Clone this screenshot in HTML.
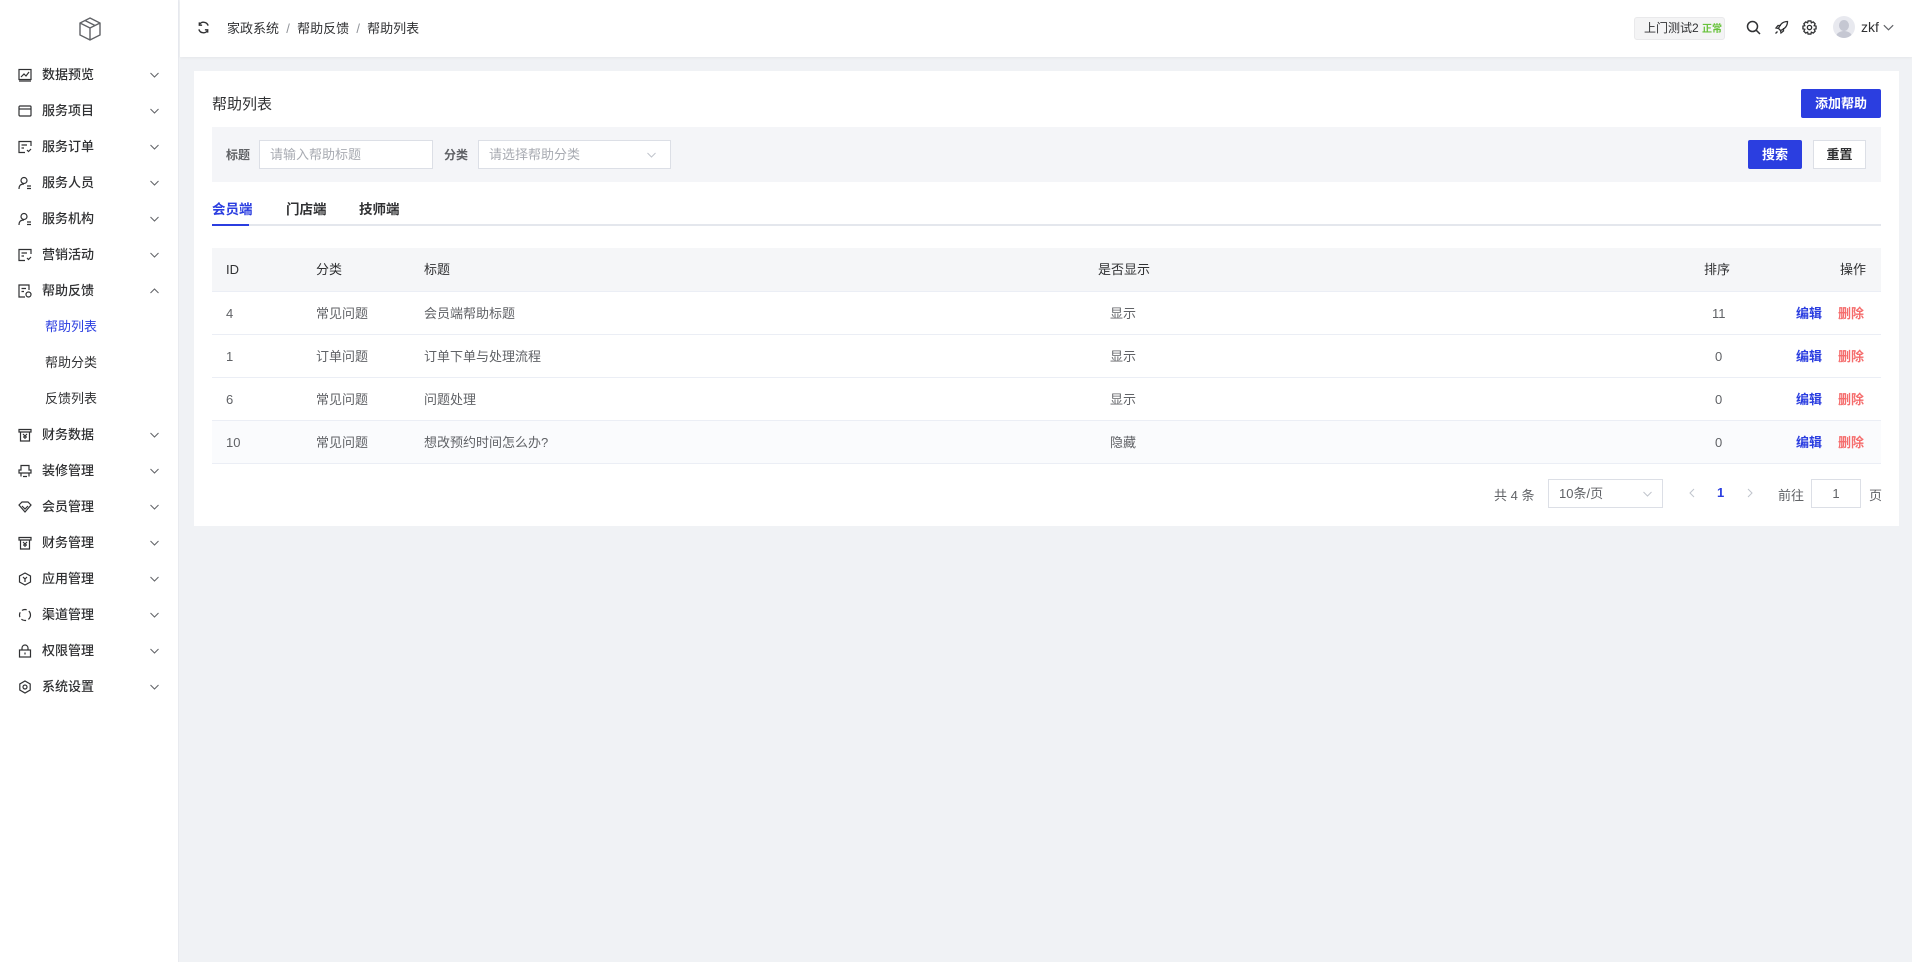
<!DOCTYPE html>
<html><head><meta charset="utf-8"><style>
*{box-sizing:border-box;margin:0;padding:0}
body{width:1912px;height:962px;background:#f0f2f5;font-family:"Liberation Sans","Noto Sans CJK SC",sans-serif;color:#303133;position:relative;overflow:hidden;font-size:13px}
.a{position:absolute}
#side{left:0;top:0;width:179px;height:962px;background:#fff;border-right:1px solid #e8eaef}
.mi{position:absolute;left:0;width:179px;height:36px;line-height:36px;font-size:13px;font-weight:500;color:#303133}
.mi .ic{position:absolute;left:18px;top:11px;width:14px;height:14px}
.mi .t{position:absolute;left:42px}
.cv{position:absolute;left:150px;top:15px;width:9px;height:6px}
.sub{position:absolute;left:45px;font-size:13px;color:#303133;height:36px;line-height:36px}
#hdr{left:180px;top:0;width:1732px;height:57px;background:#fff;box-shadow:0 1px 3px rgba(0,0,0,.05)}
#card{left:194px;top:71px;width:1705px;height:455px;background:#fff}
.in{position:absolute;background:#fff;border:1px solid #dcdfe6;height:29px;line-height:27px;padding-left:10px;color:#a8abb2;font-size:13px}
.row{position:absolute;left:212px;width:1669px;height:43px;border-bottom:1px solid #ebeef5}
.c{position:absolute;top:0;line-height:43px;font-size:13px;color:#606266}
.btn{position:absolute;height:29px;line-height:29px;text-align:center;font-size:13px;font-weight:bold}
</style></head><body>
<svg width="0" height="0" style="position:absolute"><defs><symbol id="dn" viewBox="0 0 9 6"><path d="M0.5 1 L4.5 5 L8.5 1" fill="none" stroke="#606266" stroke-width="1"/></symbol><symbol id="up" viewBox="0 0 9 6"><path d="M0.5 5 L4.5 1 L8.5 5" fill="none" stroke="#606266" stroke-width="1"/></symbol><symbol id="dl" viewBox="0 0 9 6"><path d="M0.5 1 L4.5 5 L8.5 1" fill="none" stroke="#c0c4cc" stroke-width="1"/></symbol></defs></svg>
<div id="side" class="a">
<svg class="a" style="left:78px;top:16px" width="24" height="26" viewBox="0 0 24 26" fill="none" stroke="#606266" stroke-width="1.4"><path d="M12 2 L22 7 L22 19 L12 24 L2 19 L2 7 Z M2 7 L12 12 L22 7 M12 12 L12 24 M7 4.5 L17 9.5"/></svg>
<div class="mi" style="top:57px"><svg class="ic" viewBox="0 0 14 14" fill="none" stroke="#303133" stroke-width="1.2"><rect x="1" y="1.5" width="12" height="10"/><path d="M3 9 L6 6 L8 8 L11 4 M1 13 H13"/></svg><span class="t">数据预览</span><svg class="cv"><use href="#dn"/></svg></div>
<div class="mi" style="top:93px"><svg class="ic" viewBox="0 0 14 14" fill="none" stroke="#303133" stroke-width="1.2"><rect x="1" y="2" width="12" height="10" rx="1"/><path d="M1 5 H13"/></svg><span class="t">服务项目</span><svg class="cv"><use href="#dn"/></svg></div>
<div class="mi" style="top:129px"><svg class="ic" viewBox="0 0 14 14" fill="none" stroke="#303133" stroke-width="1.2"><path d="M13 6 V1.5 H1 V12.5 H7 M3.5 5 H9 M3.5 8 H6 M9 10 L10.5 11.5 L13 9"/></svg><span class="t">服务订单</span><svg class="cv"><use href="#dn"/></svg></div>
<div class="mi" style="top:165px"><svg class="ic" viewBox="0 0 14 14" fill="none" stroke="#303133" stroke-width="1.2"><circle cx="6" cy="4.5" r="3"/><path d="M1 13 C1 9 3 8 6 8 M9 10 H13 M9 12.5 H13"/></svg><span class="t">服务人员</span><svg class="cv"><use href="#dn"/></svg></div>
<div class="mi" style="top:201px"><svg class="ic" viewBox="0 0 14 14" fill="none" stroke="#303133" stroke-width="1.2"><circle cx="6" cy="4.5" r="3"/><path d="M1 13 C1 9 3 8 6 8 M9 10 H13 M9 12.5 H13"/></svg><span class="t">服务机构</span><svg class="cv"><use href="#dn"/></svg></div>
<div class="mi" style="top:237px"><svg class="ic" viewBox="0 0 14 14" fill="none" stroke="#303133" stroke-width="1.2"><path d="M13 6 V1.5 H1 V12.5 H7 M3.5 5 H9 M3.5 8 H6 M9 10 L10.5 11.5 L13 9"/></svg><span class="t">营销活动</span><svg class="cv"><use href="#dn"/></svg></div>
<div class="mi" style="top:273px"><svg class="ic" viewBox="0 0 14 14" fill="none" stroke="#303133" stroke-width="1.2"><path d="M11 6 V1 H1 V13 H7 M3.5 4.5 H8 M3.5 7.5 H6"/><circle cx="10.5" cy="10.5" r="2.5"/></svg><span class="t">帮助反馈</span><svg class="cv"><use href="#up"/></svg></div>
<div class="sub" style="top:309px;color:#2b3ee0">帮助列表</div>
<div class="sub" style="top:345px">帮助分类</div>
<div class="sub" style="top:381px">反馈列表</div>
<div class="mi" style="top:417px"><svg class="ic" viewBox="0 0 14 14" fill="none" stroke="#303133" stroke-width="1.2"><path d="M1 1.5 H13 V4 H1 Z M2.5 4 V13 H11.5 V4 M5 6 L7 8 L9 6 M7 8 V11 M5 9 H9"/></svg><span class="t">财务数据</span><svg class="cv"><use href="#dn"/></svg></div>
<div class="mi" style="top:453px"><svg class="ic" viewBox="0 0 14 14" fill="none" stroke="#303133" stroke-width="1.2"><path d="M3 1.5 H11 V6 H13 V9 H1 V6 H3 Z M3 9 V12.5 M11 9 V12.5 M5 12.5 H9"/></svg><span class="t">装修管理</span><svg class="cv"><use href="#dn"/></svg></div>
<div class="mi" style="top:489px"><svg class="ic" viewBox="0 0 14 14" fill="none" stroke="#303133" stroke-width="1.2"><path d="M1 5 L4 2 H10 L13 5 L7 12 Z M4 6 L7 9 L10 6"/></svg><span class="t">会员管理</span><svg class="cv"><use href="#dn"/></svg></div>
<div class="mi" style="top:525px"><svg class="ic" viewBox="0 0 14 14" fill="none" stroke="#303133" stroke-width="1.2"><path d="M1 1.5 H13 V4 H1 Z M2.5 4 V13 H11.5 V4 M5 6 L7 8 L9 6 M7 8 V11 M5 9 H9"/></svg><span class="t">财务管理</span><svg class="cv"><use href="#dn"/></svg></div>
<div class="mi" style="top:561px"><svg class="ic" viewBox="0 0 14 14" fill="none" stroke="#303133" stroke-width="1.2"><path d="M7 1 L12.5 4 V10 L7 13 L1.5 10 V4 Z M5 5 L7 7 L9 5 M7 7 V10"/></svg><span class="t">应用管理</span><svg class="cv"><use href="#dn"/></svg></div>
<div class="mi" style="top:597px"><svg class="ic" viewBox="0 0 14 14" fill="none" stroke="#303133" stroke-width="1.2" stroke-dasharray="5 2.5"><circle cx="7" cy="7" r="5.5"/></svg><span class="t">渠道管理</span><svg class="cv"><use href="#dn"/></svg></div>
<div class="mi" style="top:633px"><svg class="ic" viewBox="0 0 14 14" fill="none" stroke="#303133" stroke-width="1.2"><rect x="1.5" y="6" width="11" height="7"/><path d="M4 6 V4 A3 3 0 0 1 10 4 V6 M7 8.5 V10.5"/></svg><span class="t">权限管理</span><svg class="cv"><use href="#dn"/></svg></div>
<div class="mi" style="top:669px"><svg class="ic" viewBox="0 0 14 14" fill="none" stroke="#303133" stroke-width="1.2"><path d="M7 1 L12.2 4 V10 L7 13 L1.8 10 V4 Z"/><circle cx="7" cy="7" r="2"/></svg><span class="t">系统设置</span><svg class="cv"><use href="#dn"/></svg></div>
</div>

<div id="hdr" class="a">
<svg class="a" style="left:17px;top:21px" width="13" height="13" viewBox="0 0 14 14" fill="none" stroke="#303133" stroke-width="1.5"><path d="M12 5 A5.2 5.2 0 0 0 2.5 4 M2 9 A5.2 5.2 0 0 0 11.5 10 M2.5 1.5 V4.5 H5.5 M11.5 12.5 V9.5 H8.5"/></svg>
<div class="a" style="left:47px;top:18px;font-size:13px;color:#303133;white-space:pre">家政系统  <span style="color:#909399">/</span>  帮助反馈  <span style="color:#909399">/</span>  帮助列表</div>
<div class="a" style="left:1454px;top:17px;width:91px;height:23px;background:#f4f4f5;border:1px solid #e9e9eb;border-radius:3px;font-size:12px;line-height:21px;padding-left:9px;color:#303133">上门测试2 <span style="color:#67c23a;font-size:10px;font-weight:bold">正常</span></div>
<svg class="a" style="left:1566px;top:20px" width="15" height="15" viewBox="0 0 15 15" fill="none" stroke="#303133" stroke-width="1.5"><circle cx="6.5" cy="6.5" r="5"/><path d="M10.3 10.3 L14 14"/></svg>
<svg class="a" style="left:1594px;top:20px" width="15" height="15" viewBox="0 0 15 15" fill="none" stroke="#303133" stroke-width="1.3"><path d="M13.5 1.5 C9 1.5 6 4.5 4.5 8.5 L6.5 10.5 C10.5 9 13.5 6 13.5 1.5 Z M4.5 8.5 L2 8 L4 5.5 H7 M6.5 10.5 L7 13 L9.5 11 V8 M3.5 11.5 L1.5 13.5"/></svg>
<svg class="a" style="left:1622px;top:20px" width="15" height="15" viewBox="0 0 16 16" fill="none" stroke="#303133" stroke-width="1.4"><path d="M6.5 1 H9.5 L10 3 L12 2 L14 4 L13 6 L15 6.5 V9.5 L13 10 L14 12 L12 14 L10 13 L9.5 15 H6.5 L6 13 L4 14 L2 12 L3 10 L1 9.5 V6.5 L3 6 L2 4 L4 2 L6 3 Z"/><circle cx="8" cy="8" r="2.3"/></svg>
<div class="a" style="left:1653px;top:16px;width:22px;height:22px;border-radius:50%;background:#e8e9ef;overflow:hidden"><div class="a" style="left:6px;top:4px;width:10px;height:11px;border-radius:50%;background:#c5c7d2"></div><div class="a" style="left:3px;top:15px;width:16px;height:12px;border-radius:50%;background:#c5c7d2"></div></div>
<div class="a" style="left:1681px;top:19px;font-size:14px;color:#303133">zkf</div>
<svg class="a" style="left:1703px;top:24px" width="11" height="7"><use href="#dn"/></svg>
</div>

<div id="card" class="a"></div>
<div class="a" style="left:212px;top:93px;font-size:15px;color:#303133">帮助列表</div>
<div class="btn" style="left:1801px;top:89px;width:80px;background:#2b3ee0;color:#fff;border-radius:2px">添加帮助</div>
<div class="a" style="left:212px;top:127px;width:1669px;height:55px;background:#f4f5f8"></div>
<div class="a" style="left:226px;top:146px;font-size:12px;color:#606266;font-weight:bold">标题</div>
<div class="in" style="left:259px;top:140px;width:174px">请输入帮助标题</div>
<div class="a" style="left:444px;top:146px;font-size:12px;color:#606266;font-weight:bold">分类</div>
<div class="in" style="left:478px;top:140px;width:193px">请选择帮助分类<svg class="a" style="left:168px;top:11px" width="9" height="6"><use href="#dl"/></svg></div>
<div class="btn" style="left:1748px;top:140px;width:54px;background:#2b3ee0;color:#fff;border-radius:2px">搜索</div>
<div class="btn" style="left:1813px;top:140px;width:53px;background:#fff;border:1px solid #dcdfe6;color:#303133;font-weight:bold;line-height:27px">重置</div>

<div class="a" style="left:212px;top:224px;width:1669px;height:2px;background:#e4e7ed"></div>
<div class="a" style="left:212px;top:224px;width:37px;height:2px;background:#2b3ee0"></div>
<div class="a" style="left:212px;top:198px;font-size:13.5px;color:#2b3ee0;font-weight:bold">会员端</div>
<div class="a" style="left:286px;top:198px;font-size:13.5px;color:#303133;font-weight:bold">门店端</div>
<div class="a" style="left:359px;top:198px;font-size:13.5px;color:#303133;font-weight:bold">技师端</div>

<div class="row" style="top:248px;background:#f5f6f8;height:44px">
<span class="c" style="left:14px;color:#303133">ID</span><span class="c" style="left:104px;color:#303133">分类</span><span class="c" style="left:212px;color:#303133">标题</span><span class="c" style="left:886px;color:#303133">是否显示</span><span class="c" style="left:1492px;color:#303133">排序</span><span class="c" style="left:1628px;color:#303133">操作</span></div>
<div class="row" style="top:292px"><span class="c" style="left:14px">4</span><span class="c" style="left:104px">常见问题</span><span class="c" style="left:212px">会员端帮助标题</span><span class="c" style="left:898px">显示</span><span class="c" style="left:1500px">11</span><span class="c" style="left:1584px;color:#2b3ee0;font-weight:bold">编辑</span><span class="c" style="left:1626px;color:#f56c6c;font-weight:bold">删除</span></div>
<div class="row" style="top:335px"><span class="c" style="left:14px">1</span><span class="c" style="left:104px">订单问题</span><span class="c" style="left:212px">订单下单与处理流程</span><span class="c" style="left:898px">显示</span><span class="c" style="left:1503px">0</span><span class="c" style="left:1584px;color:#2b3ee0;font-weight:bold">编辑</span><span class="c" style="left:1626px;color:#f56c6c;font-weight:bold">删除</span></div>
<div class="row" style="top:378px"><span class="c" style="left:14px">6</span><span class="c" style="left:104px">常见问题</span><span class="c" style="left:212px">问题处理</span><span class="c" style="left:898px">显示</span><span class="c" style="left:1503px">0</span><span class="c" style="left:1584px;color:#2b3ee0;font-weight:bold">编辑</span><span class="c" style="left:1626px;color:#f56c6c;font-weight:bold">删除</span></div>
<div class="row" style="top:421px;background:#fafbfd"><span class="c" style="left:14px">10</span><span class="c" style="left:104px">常见问题</span><span class="c" style="left:212px">想改预约时间怎么办?</span><span class="c" style="left:898px">隐藏</span><span class="c" style="left:1503px">0</span><span class="c" style="left:1584px;color:#2b3ee0;font-weight:bold">编辑</span><span class="c" style="left:1626px;color:#f56c6c;font-weight:bold">删除</span></div>

<div class="a" style="left:1494px;top:485px;font-size:13px;color:#606266">共 4 条</div>
<div class="in" style="left:1548px;top:479px;width:115px;color:#606266">10条/页<svg class="a" style="left:94px;top:11px" width="9" height="6"><use href="#dl"/></svg></div>
<svg class="a" style="left:1689px;top:488px" width="6" height="10" viewBox="0 0 6 10"><path d="M5 1 L1 5 L5 9" fill="none" stroke="#c0c4cc"/></svg>
<div class="a" style="left:1717px;top:485px;font-size:13px;color:#2b3ee0;font-weight:bold">1</div>
<svg class="a" style="left:1747px;top:488px" width="6" height="10" viewBox="0 0 6 10"><path d="M1 1 L5 5 L1 9" fill="none" stroke="#c0c4cc"/></svg>
<div class="a" style="left:1778px;top:485px;font-size:13px;color:#606266">前往</div>
<div class="in" style="left:1811px;top:479px;width:50px;color:#606266;text-align:center;padding:0">1</div>
<div class="a" style="left:1869px;top:485px;font-size:13px;color:#606266">页</div>
</body></html>
